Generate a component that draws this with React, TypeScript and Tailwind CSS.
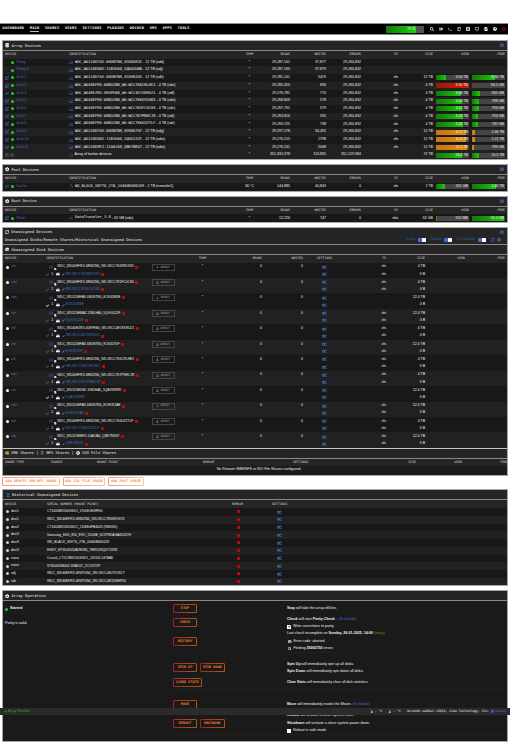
import type { ReactNode } from 'react'
import {
  FaCheck, FaCog, FaCogs, FaDatabase, FaDownload, FaExternalLinkAlt, FaFileAlt, FaHdd,
  FaLinux, FaPen, FaPlus, FaSearch, FaSignOutAlt, FaSyncAlt, FaTerminal, FaThermometerHalf,
  FaTimesCircle, FaUsb, FaWindows, FaRegCopy, FaListAlt, FaDesktop, FaQuestionCircle, FaKeyboard,
  FaPowerOff, FaCompactDisc, FaHourglassHalf, FaBook, FaMinusSquare, FaRegHdd,
} from 'react-icons/fa'

const NAV = ['DASHBOARD', 'MAIN', 'SHARES', 'USERS', 'SETTINGS', 'PLUGINS', 'DOCKER', 'VMS', 'APPS', 'TOOLS']

const TONES = {
  green: 'bg-linear-to-r from-[#127a06] to-[#1cc80e]',
  red: 'bg-linear-to-r from-[#941c00] to-[#e01500]',
  orange: 'bg-linear-to-r from-[#c87516] to-[#e08a12]',
}

type Tone = keyof typeof TONES
type Usage = [value: string, percent: number, tone: Tone]

interface Disk {
  name: string
  id: string
  info: string
  temp?: string
  reads: string
  writes: string
  errors: string
  fs?: string
  size?: string
  used?: Usage
  free?: Usage
}

const E = '29,260,832'

const ARRAY: Disk[] = [
  { name: 'Parity', id: 'WDC_WD120EFAX-68UNTN0_8CK0DR3E', info: '12 TB (sdd)', reads: '29,287,161', writes: '37,877', errors: E },
  { name: 'Parity 2', id: 'WDC_WD120EDBZ-11B1HA0_5QDAXUBB', info: '12 TB (sdj)', reads: '29,287,160', writes: '37,879', errors: E },
  { name: 'Disk 1', id: 'WDC_WD120EFAX-68UNTN0_8CHVKZAE', info: '12 TB (sdk)', reads: '29,281,141', writes: '5419', errors: E, fs: 'xfs', size: '12 TB', used: ['3.64 TB', 31, 'green'], free: ['8.36 TB', 70, 'green'] },
  { name: 'Disk 2', id: 'WDC_WD40EFRX-68N32N0_WD-WCC7K6CRLHE2', info: '4 TB (sdn)', reads: '29,282,450', writes: '836', errors: E, fs: 'xfs', size: '4 TB', used: ['3.90 TB', 98, 'red'], free: ['94.5 GB', 3, 'red'] },
  { name: 'Disk 3', id: 'WDC_WD40EZRX-00SPEB0_WD-WCC4E1SKRU21', info: '4 TB (sdf)', reads: '29,276,781', writes: '770', errors: E, fs: 'xfs', size: '4 TB', used: ['3.06 TB', 77, 'green'], free: ['941 GB', 24, 'green'] },
  { name: 'Disk 5', id: 'WDC_WD40EFRX-68N32N0_WD-WCC7K6SFDXK5', info: '4 TB (sdo)', reads: '29,268,809', writes: '578', errors: E, fs: 'xfs', size: '4 TB', used: ['3.20 TB', 80, 'green'], free: ['798 GB', 20, 'green'] },
  { name: 'Disk 6', id: 'WDC_WD40EFRX-68N32N0_WD-WCC7K5FCUC84', info: '4 TB (sdc)', reads: '29,267,761', writes: '579', errors: E, fs: 'xfs', size: '4 TB', used: ['3.21 TB', 80, 'green'], free: ['793 GB', 20, 'green'] },
  { name: 'Disk 7', id: 'WDC_WD40EFRX-68N32N0_WD-WCC7K7PNHCJR', info: '4 TB (sdt)', reads: '29,263,816', writes: '595', errors: E, fs: 'xfs', size: '4 TB', used: ['3.25 TB', 81, 'green'], free: ['753 GB', 19, 'green'] },
  { name: 'Disk 8', id: 'WDC_WD40EFRX-68N32N0_WD-WCC7K6UZZTLF', info: '4 TB (sdr)', reads: '29,269,225', writes: '738', errors: E, fs: 'xfs', size: '4 TB', used: ['3.26 TB', 82, 'green'], free: ['737 GB', 19, 'green'] },
  { name: 'Disk 9', id: 'WDC_WD120EFAX-68UNTN0_8CK0D75F', info: '12 TB (sdg)', reads: '29,297,178', writes: '34,492', errors: E, fs: 'xfs', size: '12 TB', used: ['10.9 TB', 91, 'orange'], free: ['1.06 TB', 9, 'orange'] },
  { name: 'Disk 10', id: 'WDC_WD120EDBZ-11B1HA0_5QGG1ZZF', info: '12 TB (sdm)', reads: '29,276,515', writes: '1798', errors: E, fs: 'xfs', size: '12 TB', used: ['10.8 TB', 91, 'orange'], free: ['1.21 TB', 9, 'orange'] },
  { name: 'Disk 11', id: 'WDC_WD120EMFZ-11A6JA0_QBK7NR4T', info: '12 TB (sdm)', reads: '29,276,241', writes: '2068', errors: E, fs: 'xfs', size: '12 TB', used: ['11.2 TB', 93, 'orange'], free: ['799 GB', 7, 'orange'] },
]

const POOL: Disk[] = [
  { name: 'Cache', id: 'WD_BLACK_SN770_2TB_24460B400209', info: '2 TB (nvme0n1)', temp: '36 °C', reads: '144,885', writes: '40,843', errors: '0', fs: 'xfs', size: '2 TB', used: ['551 GB', 28, 'green'], free: ['1.45 TB', 73, 'green'] },
]

const BOOT: Disk[] = [
  { name: 'Flash', id: 'DataTraveler_3.0', info: '62 GB (sda)', reads: '12,226', writes: '747', errors: '0', fs: 'vfat', size: '62 GB', used: ['922 MB', 3, 'green'], free: ['61.1 GB', 98, 'green'] },
]

interface Unassigned {
  dev: string
  id: string
  serial: string
  fs: boolean
  size: string
  mounted?: boolean
}

const UNASSIGNED: Unassigned[] = [
  { dev: 'sdr', id: 'WDC_WD40EFRX-68N32N0_WD-WCC7K6SFDXK5', serial: 'WD-WCC7K6SFDXK5', fs: true, size: '4 TB' },
  { dev: 'sdq', id: 'WDC_WD40EFRX-68N32N0_WD-WCC7K5FCUC84', serial: 'WD-WCC7K5FCUC84', fs: true, size: '4 TB' },
  { dev: 'sdp', id: 'WDC_WD120EFAX-68UNTN0_8CK0DM3E', serial: '8CK0DM3E', fs: false, size: '12.0 TB', mounted: true },
  { dev: 'sds', id: 'WDC_WD120EMAZ-11BLHA0_5QGG1ZZF', serial: '5QGG1ZZF', fs: true, size: '12.0 TB' },
  { dev: 'sdf', id: 'WDC_WD40EZRX-00SPEB0_WD-WCC4E1SKRU21', serial: 'WD-WCC4E1SKRU21', fs: true, size: '4 TB' },
  { dev: 'sds', id: 'WDC_WD120EFAX-68UNTN0_8CK0D75F', serial: '8CK0D75F', fs: true, size: '12.0 TB' },
  { dev: 'sdt', id: 'WDC_WD40EFRX-68N32N0_WD-WCC7K6CRLHE2', serial: 'WD-WCC7K6CRLHE2', fs: true, size: '4 TB' },
  { dev: 'sdu', id: 'WDC_WD40EFRX-68N32N0_WD-WCC7K7PNHCJR', serial: 'WD-WCC7K7PNHCJR', fs: true, size: '4 TB' },
  { dev: 'sdv', id: 'WDC_WD120EDBZ-11B1HA0_5QAXW8RR', serial: '5QAXW8RR', fs: false, size: '12.0 TB', mounted: true },
  { dev: 'sdw', id: 'WDC_WD120EFAX-68UNTN0_8CHVKZAE', serial: '8CHVKZAE', fs: true, size: '12.0 TB' },
  { dev: 'sdx', id: 'WDC_WD40EFRX-68N32N0_WD-WCC7K6UZZTLF', serial: 'WD-WCC7K6UZZTLF', fs: true, size: '4 TB' },
  { dev: 'sdy', id: 'WDC_WD120EMFZ-11A6JA0_QBK7NR4T', serial: 'QBK7NR4T', fs: true, size: '12.0 TB' },
]

const HISTORY = [
  ['dev1', 'CT1000MX500SSD1_1910E1E09F60'],
  ['dev1', 'WDC_WD40EFRX-68N32N0_WD-WCC7K6SFDS74'],
  ['dev2', 'CT1000MX500SSD1_2108E4FB4026 (VMSSD)'],
  ['dev3', 'Samsung_SSD_850_EVO_250GB_S21PNXAGA65057H'],
  ['dev3', 'WD_BLACK_SN770_2TB_24460B400209'],
  ['dev3', 'HGST_HTS545050A7E380_TE85133Q0T13XN'],
  ['none', 'Crucial_CT512MX100SSD1_14150C147BA5'],
  ['none', 'ST6000DM003-1WA107_ZC1357ZP'],
  ['sdj', 'WDC_WD40EFRX-68WT0N0_WD-WCC4E2TD3517'],
  ['sdr', 'WDC_WD40EFRX-68WT0N0_WD-WCC4E1DNHP34'],
]

function Panel({ children, className = '' }: { children: ReactNode; className?: string }) {
  return (
    <section className={`ml-[2px] w-[506px] overflow-hidden border border-[#a6a6a6] bg-[#1a1a1a] ${className}`}>{children}</section>
  )
}

function Title({ children, menu = false }: { children: ReactNode; menu?: boolean }) {
  return (
    <div className="flex h-[10px] items-center gap-[2px] border-b border-[#888] bg-[#252525] pr-[3px] pl-[2px] font-['DejaVu_Sans_Mono',monospace] text-[3.8px] text-[#f0f0f0]">
      {children}
      {menu && <FaKeyboard className="ml-auto size-[4.5px] text-[#486dc4]" />}
    </div>
  )
}

const HEAD = "items-center bg-[#252525] font-['DejaVu_Sans_Mono',monospace] text-[3.2px] text-[#dedede]"
const DISK_GRID = 'grid grid-cols-[66px_171px_19px_31px_36px_35px_37px_35px_36px_36px]'
const UN_GRID = 'grid grid-cols-[43px_102px_45px_19px_50px_41px_43px_40px_39px_40px_40px]'

function DiskHead() {
  return (
    <div className={`${DISK_GRID} ${HEAD} h-[7.7px]`}>
      <span className="pl-[2px]">DEVICE</span>
      <span>IDENTIFICATION</span>
      <span className="text-center">TEMP</span>
      {['READS', 'WRITES', 'ERRORS', 'FS', 'SIZE', 'USED', 'FREE'].map((h) => (
        <span key={h} className="text-right">{h}</span>
      ))}
    </div>
  )
}

function Bar({ usage }: { usage: Usage }) {
  const [value, percent, tone] = usage
  return (
    <div className="relative ml-[3px] h-[5px] w-[33px] bg-[#454545]">
      <div className={`h-full ${TONES[tone]}`} style={{ width: `${percent}%` }} />
      <span className="absolute inset-0 pr-[1px] text-right leading-[5px]">{value}</span>
    </div>
  )
}

function DiskRow({ disk, index, kind }: { disk: Disk; index: number; kind: 'array' | 'pool' | 'boot' }) {
  const parity = disk.name.startsWith('Parity')
  const Icon = kind === 'boot' ? FaUsb : kind === 'pool' ? FaLinux : FaRegHdd
  return (
    <div className={`${DISK_GRID} h-[7.73px] items-center text-[3.6px] text-[#f2f2f2] ${index % 2 ? 'bg-[#212121]' : 'bg-[#181818]'}`}>
      <div className="flex items-center pl-[2px] text-[#486dc4]">
        <span className="w-[6px]">{!parity && <FaExternalLinkAlt className="size-[3.8px]" />}</span>
        <span className="mr-[2.5px] size-[3px] rounded-full bg-[#20d020]" />
        {disk.name}
      </div>
      <div className="flex items-center">
        <Icon className="mr-[1.5px] size-[4.4px] text-[#486dc4]" />
        <span className="font-['DejaVu_Sans_Mono',monospace] text-[3.72px]">{disk.id}</span>
        <span className="ml-[1px]">- {disk.info}</span>
      </div>
      <span className="text-center">{disk.temp ?? '*'}</span>
      <span className="text-right">{disk.reads}</span>
      <span className="text-right">{disk.writes}</span>
      <span className="text-right">{disk.errors}</span>
      <span className="text-right">{disk.fs}</span>
      <span className="text-right">{disk.size}</span>
      {disk.used && <Bar usage={disk.used} />}
      {disk.free && <Bar usage={disk.free} />}
    </div>
  )
}

function TotalRow() {
  return (
    <div className={`${DISK_GRID} h-[7.73px] items-center bg-[#212121] text-[3.6px] text-[#f2f2f2]`}>
      <div className="flex gap-[1px] pl-[2px] text-[#4a4a4a]">
        <FaMinusSquare className="size-[4px]" />
        <FaMinusSquare className="size-[4px]" />
      </div>
      <div className="flex items-center gap-[1.5px]"><FaRegHdd className="size-[4px] text-[#555]" />Array of twelve devices</div>
      <span className="text-center">*</span>
      <span className="text-right">351,332,378</span>
      <span className="text-right">113,835</span>
      <span className="text-right">351,129,984</span>
      <span />
      <span className="text-right">72 TB</span>
      <Bar usage={['56.5 TB', 79, 'green']} />
      <Bar usage={['15.5 TB', 21, 'green']} />
    </div>
  )
}

function RemoveMark() {
  return <span className="block size-[3px] bg-[#b80808]" />
}

function UnassignedRow({ row, index }: { row: Unassigned; index: number }) {
  return (
    <div className={`h-[15.45px] text-[3.5px] text-[#f0f0f0] ${index % 2 ? 'bg-[#212121]' : 'bg-[#181818]'}`}>
      <div className={`${UN_GRID} h-[8px] items-center pt-[1px]`}>
        <div className="flex items-center gap-[2px] pl-[3px] text-[#486dc4]">
          <span className="size-[3px] rounded-full bg-white" />
          {row.dev}
        </div>
        <div className="flex items-center pl-[2.5px]">
          <FaRegHdd className="mr-[1.5px] size-[4.2px] text-[#3c5fae]" />
          <FaFileAlt className="mt-[4px] mr-[0.5px] size-[2.6px] text-white" />
          <span className="mr-[1.5px] text-[3.25px]">{row.id}</span>
          <RemoveMark />
        </div>
        <div className="pl-[3.5px]">
          <div className="flex h-[7px] w-[23px] items-center justify-center gap-[1.5px] border border-[#444] font-['DejaVu_Sans_Mono',monospace] text-[3.1px] font-bold text-[#777]">
            <FaDownload className="size-[2.8px]" />
            ARRAY
          </div>
        </div>
        <span className="text-center">*</span>
        <span className="text-right">0</span>
        <span className="text-right">0</span>
        <FaCogs className="mx-auto size-[4.6px] text-[#486dc4]" />
        <span className="text-right">{row.fs && 'xfs'}</span>
        <span className="text-right">{row.size}</span>
      </div>
      <div className={`${UN_GRID} h-[7.4px] items-center`}>
        <span />
        <div className="flex items-center text-[#486dc4]">
          <FaCheck className={`size-[3.2px] ${row.mounted ? 'text-white' : ''}`} />
          <span className="w-[6.5px] pl-[2px] text-[#f0f0f0]">1</span>
          <FaHdd className="mr-[2.3px] size-[4px] text-white" />
          <FaPen className="mr-[1px] size-[2.8px]" />
          <span className="mr-[1.5px] text-[3.4px]">{row.serial}</span>
          {!row.mounted && <RemoveMark />}
        </div>
        <span />
        <span />
        <span />
        <span />
        <FaCogs className="mx-auto size-[4.6px] text-[#486dc4]" />
        <span className="text-right">{row.fs && 'xfs'}</span>
        <span className="text-right">0 B</span>
      </div>
    </div>
  )
}

function Toggle({ label }: { label: string }) {
  return (
    <span className="flex items-center gap-[2.5px] font-['DejaVu_Sans_Mono',monospace] text-[3px] text-[#1f6fa5]">
      {label}
      <span className="flex h-[4px] w-[8px] justify-end rounded-[1px] bg-[#3c6dcb]">
        <span className="w-[4px] rounded-[1px] bg-white" />
      </span>
    </span>
  )
}

function OpButton({ children, className = 'w-[24px]' }: { children: ReactNode; className?: string }) {
  return (
    <span className={`h-[9px] shrink-0 rounded-[1.5px] bg-linear-to-r from-[#9a2424] to-[#a8581c] p-px ${className}`}>
      <span className="flex h-full items-center justify-center bg-[#1a1a1a] font-['DejaVu_Sans_Mono',monospace] text-[3.3px] font-bold tracking-[0.1px] text-[#ff7b22]">{children}</span>
    </span>
  )
}

function ShareButton({ children, className }: { children: ReactNode; className: string }) {
  return (
    <span className={`h-[9px] rounded-[1.5px] bg-linear-to-r from-[#f3928f] to-[#fbc8a0] p-px ${className}`}>
      <span className="flex h-full items-center justify-center bg-white font-['DejaVu_Sans_Mono',monospace] text-[3.3px] font-bold tracking-[0.15px] text-[#f78a50]">{children}</span>
    </span>
  )
}

function OpBlock({ left, buttons, lines, className }: { left?: ReactNode; buttons: ReactNode; lines: ReactNode; className: string }) {
  return (
    <div className={`grid grid-cols-[170px_114px_1fr] ${className}`}>
      <div>{left}</div>
      <div className="flex flex-col">{buttons}</div>
      <div className="flex flex-col">{lines}</div>
    </div>
  )
}

function Line({ children, className = '' }: { children: ReactNode; className?: string }) {
  return <p className={`flex h-[7.25px] shrink-0 items-center gap-[1px] ${className}`}>{children}</p>
}

function Divider() {
  return <div className="ml-[169px] h-px bg-[#202020]" />
}

export default function App() {
  return (
    <main className="relative h-[750px] w-[510px] overflow-hidden bg-white pt-[23px] font-['Liberation_Sans',sans-serif] text-[3.6px] leading-none whitespace-nowrap text-[#f0f0f0]">
      <header className="flex h-[12px] w-[508px] items-center border-y border-[#8c8c8c] bg-black pl-[2.5px]">
        <nav className="flex gap-[5.5px] font-['DejaVu_Sans_Mono',monospace] text-[3.6px] font-bold tracking-[0.25px] text-white">
          {NAV.map((item) => (
            <span key={item} className={item === 'MAIN' ? 'border-b border-[#bbb] pt-px' : 'py-px'}>{item}</span>
          ))}
        </nav>
        <div className="relative ml-auto h-[7px] w-[38px] bg-[#505050]">
          <div className="h-full w-[79%] bg-linear-to-r from-[#127a06] to-[#1cd00e]" />
          <span className="absolute inset-0 pl-[13px] text-center leading-[7px]">79 %</span>
        </div>
        <div className="flex gap-[5px] pr-[2.5px] pl-[6px] text-[4px] text-white">
          <FaSearch /><FaSignOutAlt /><FaTerminal /><FaRegCopy /><FaListAlt /><FaDesktop /><FaFileAlt /><FaQuestionCircle />
          <FaPowerOff className="text-[#e01010]" />
        </div>
      </header>

      <Panel className="mt-[5px] h-[120px]">
        <Title menu><FaDatabase className="size-[4.4px]" />Array Devices</Title>
        <DiskHead />
        {ARRAY.map((disk, i) => <DiskRow key={disk.name} disk={disk} index={i} kind="array" />)}
        <TotalRow />
      </Panel>

      <Panel className="mt-[4px] h-[27.5px]">
        <Title menu><FaCog className="size-[4.4px]" />Pool Devices</Title>
        <DiskHead />
        {POOL.map((disk) => <DiskRow key={disk.name} disk={disk} index={0} kind="pool" />)}
      </Panel>

      <Panel className="mt-[4.3px] h-[27.4px]">
        <Title menu><FaCog className="size-[4.4px]" />Boot Device</Title>
        <DiskHead />
        {BOOT.map((disk) => <DiskRow key={disk.name} disk={disk} index={0} kind="boot" />)}
      </Panel>

      <Panel className="mt-[3.8px] h-[249px]">
        <div className="h-[17px] border-b border-[#888] bg-[#252525] px-[2px] font-['DejaVu_Sans_Mono',monospace] text-[3.8px] text-[#f0f0f0]">
          <div className="flex h-[8px] items-center gap-[2px]">
            <FaSyncAlt className="size-[4.2px]" />Unassigned Devices
            <FaKeyboard className="mr-px ml-auto size-[4.5px] text-[#486dc4]" />
          </div>
          <div className="flex h-[8px] items-center justify-between">
            Unassigned Disks/Remote Shares/Historical Unassigned Devices
            <div className="flex items-center gap-[5px] pr-[4px]">
              <Toggle label="DISKS" /><Toggle label="SHARES" /><Toggle label="HISTORICAL" />
              <span className="flex gap-[2.5px] text-[#486dc4]"><FaSyncAlt className="size-[3.8px]" /><FaCog className="size-[3.8px]" /></span>
            </div>
          </div>
        </div>
        <Title><FaHdd className="size-[4.4px]" />Unassigned Disk Devices</Title>
        <div className={`${UN_GRID} ${HEAD} h-[7.6px]`}>
          <span className="pl-[2px]">DEVICE</span>
          <span>IDENTIFICATION</span>
          <span />
          <span className="text-center">TEMP</span>
          <span className="text-right">READS</span>
          <span className="text-right">WRITES</span>
          <span className="text-center">SETTINGS</span>
          <span className="text-right">FS</span>
          <span className="text-right">SIZE</span>
          <span className="text-right">USED</span>
          <span className="text-right">FREE</span>
        </div>
        {UNASSIGNED.map((row, i) => <UnassignedRow key={i} row={row} index={i} />)}
        <div className="border-t border-[#c4c4c4]">
          <Title>
            <FaWindows className="size-[4px] text-[#e0a030]" />SMB Shares | <FaLinux className="size-[4px] text-[#e8cf7a]" /> NFS Shares | <FaCompactDisc className="size-[4px]" />ISO File Shares
          </Title>
        </div>
        <div className={`grid grid-cols-[48px_46px_106px_40px_92px_81px_46px_46px] ${HEAD} h-[7.5px]`}>
          <span className="pl-[2px]">SHARE TYPE</span>
          <span>SOURCE</span>
          <span>MOUNT POINT</span>
          <span>REMOVE</span>
          <span className="pl-[50px]">SETTINGS</span>
          <span className="text-right">SIZE</span>
          <span className="text-right">USED</span>
          <span className="text-right">FREE</span>
        </div>
        <div className="pt-[2px] pl-[8px] text-center">No Remote SMB/NFS or ISO File Shares configured.</div>
      </Panel>

      <div className="mt-[1.5px] flex gap-[3px] pl-[2px]">
        <ShareButton className="w-[58px]">ADD REMOTE SMB/NFS SHARE</ShareButton>
        <ShareButton className="w-[42px]">ADD ISO FILE SHARE</ShareButton>
        <ShareButton className="w-[36px]">ADD ROOT SHARE</ShareButton>
      </div>

      <Panel className="mt-[3px] h-[96.5px]">
        <Title><FaHourglassHalf className="mx-[0.5px] size-[4px] text-[#3c5fae]" />Historical Unassigned Devices</Title>
        <div className={`grid grid-cols-[44px_160px_65px_1fr] ${HEAD} h-[7.6px]`}>
          <span className="pl-[2px]">DEVICE</span>
          <span>SERIAL NUMBER (MOUNT POINT)</span>
          <span className="pl-[25px]">REMOVE</span>
          <span>SETTINGS</span>
        </div>
        {HISTORY.map(([dev, serial], i) => (
          <div key={serial} className={`grid h-[7.75px] grid-cols-[44px_160px_65px_1fr] items-center ${i % 2 ? 'bg-[#212121]' : 'bg-[#181818]'}`}>
            <span className="flex items-center gap-[2px] pl-[3px]">
              <span className="size-[3px] rounded-full bg-[#ccc]" />
              {dev}
            </span>
            <span className="text-[3.3px]">{serial}</span>
            <span className="pl-[29.5px]"><RemoveMark /></span>
            <FaCogs className="ml-[5px] size-[4.6px] text-[#486dc4]" />
          </div>
        ))}
      </Panel>

      <Panel className="mt-[4.5px] h-[151.5px]">
        <Title><FaCog className="size-[4.4px]" />Array Operation</Title>
        <OpBlock
          className="h-[51px]"
          left={
            <div className="pl-[2px]">
              <div className="mt-[6px] flex items-center gap-[2px] font-bold">
                <span className="size-[3px] rounded-full bg-[#20d020]" />
                Started
              </div>
              <p className="mt-[11px]">Parity is valid.</p>
            </div>
          }
          buttons={
            <>
              <OpButton className="mt-[2.3px] w-[24px]">STOP</OpButton>
              <OpButton className="mt-[5.6px] w-[24px]">CHECK</OpButton>
              <OpButton className="mt-[9.3px] w-[24px]">HISTORY</OpButton>
            </>
          }
          lines={
            <>
              <Line className="mt-[3.5px] mb-[3.7px]"><b>Stop</b> will take the array off-line.</Line>
              <Line><b>Check</b> will start <b>Parity-Check</b>. <span className="ml-px text-[#486dc4]">(Schedule)</span></Line>
              <Line>
                <span className="mr-px flex size-[4px] items-center justify-center bg-white text-black"><FaCheck className="size-[3px]" /></span>
                Write corrections to parity
              </Line>
              <Line>Last check incomplete on <b>Sunday, 26-01-2025, 14:00</b> <span className="text-[#459c12]">(today)</span></Line>
              <Line><FaTimesCircle className="mx-px size-[3.6px]" />Error code: aborted</Line>
              <Line><FaSearch className="mx-px size-[3.6px]" />Finding <b>29260750</b> errors</Line>
            </>
          }
        />
        <Divider />
        <OpBlock
          className="h-[36px]"
          buttons={
            <>
              <div className="mt-[10px] flex gap-[2.5px]"><OpButton>SPIN UP</OpButton><OpButton className="w-[25.5px]">SPIN DOWN</OpButton></div>
              <OpButton className="mt-[5.6px] w-[28.5px]">CLEAR STATS</OpButton>
            </>
          }
          lines={
            <>
              <Line className="mt-[7.5px]"><b>Spin Up</b> will immediately spin up all disks.</Line>
              <Line><b>Spin Down</b> will immediately spin down all disks.</Line>
              <Line className="mt-[4px]"><b>Clear Stats</b> will immediately clear all disk statistics.</Line>
            </>
          }
        />
        <Divider />
        <OpBlock
          className="h-[21px]"
          buttons={<OpButton className="mt-[10px] w-[24px]">MOVE</OpButton>}
          lines={<Line className="mt-[11px]"><b>Move</b> will immediately invoke the Mover. <span className="text-[#486dc4]">(Schedule)</span></Line>}
        />
        <OpBlock
          className="h-[22.5px]"
          buttons={
            <div className="mt-[7.3px] flex gap-[2.5px]"><OpButton>REBOOT</OpButton><OpButton className="w-[25px]">SHUTDOWN</OpButton></div>
          }
          lines={
            <>
              <Line className="mt-[1px]"><b>Reboot</b> will activate a <i>clean</i> system reset.</Line>
              <Line><b>Shutdown</b> will activate a <i>clean</i> system power down.</Line>
              <Line><span className="mr-px size-[4px] bg-white" />Reboot in safe mode</Line>
            </>
          }
        />
        <Divider />
      </Panel>

      <footer className="absolute top-[708px] left-0 flex h-[7px] w-[510px] items-center bg-[#2b2b2b] pr-[3px] pl-[4px] font-['DejaVu_Sans_Mono',monospace] text-[3.2px]">
        <span className="flex items-center gap-[0.5px] font-['Liberation_Sans',sans-serif] text-[3.7px] text-[#459c12]"><FaPlus className="size-[3px]" />Array Started</span>
        <span className="ml-auto flex items-center gap-[6px]">
          <span className="flex items-center gap-[1.5px]"><FaThermometerHalf className="size-[3.4px]" />- °C</span>
          <span className="flex items-center gap-[1.5px]"><FaThermometerHalf className="size-[3.4px]" />- °C</span>
          <span>Unraid® webGui ©2024, Lime Technology, Inc.</span>
        </span>
        <span className="ml-[2px] flex items-center gap-px text-[#486dc4]"><FaBook className="size-[3px]" />manual</span>
      </footer>
    </main>
  )
}
